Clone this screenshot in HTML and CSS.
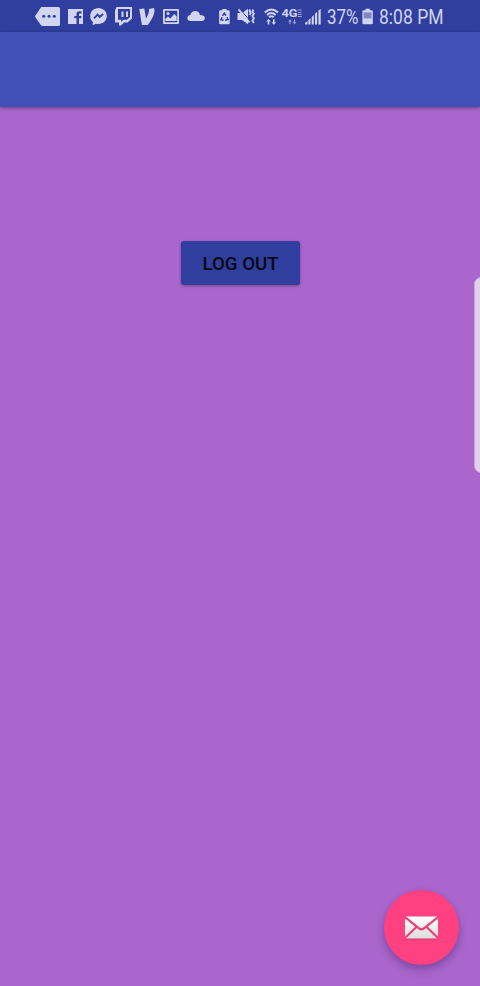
FILE: index.html
```html
<!DOCTYPE html>
<html lang="en">
<head>
<meta charset="utf-8">
<meta name="viewport" content="width=device-width">
<title>Log out</title>
<link rel="stylesheet" href="styles.css">
</head>
<body>
<div class="screen">
  <header class="status">
    <div class="group notifications">
      <svg width="25" height="32" viewBox="35 0 25 32"><path d="M41.500 7H58.500Q60 7 60 8.500V24.500Q60 26 58.500 26H42.500Q41.500 26 40.800 25L35.300 17.300Q34.800 16.500 35.300 15.700L40.500 8Q41 7 41.500 7Z"/><g class="cut"><circle cx="43.700" cy="16.300" r="1.500"/><circle cx="49" cy="16.300" r="1.500"/><circle cx="54.300" cy="16.300" r="1.500"/></g></svg>
      <svg width="15" height="32" viewBox="68 0 15 32"><path d="M68 9H83V24H79V18.300H81.200L81.500 16H79V14.500Q79 13.500 80 13.500H81.500V11.300H79.500Q76.500 11.300 76.500 14V16H74.300V18.300H76.500V24H68Z"/></svg>
      <svg width="17" height="32" viewBox="90.500 0 17 32"><path d="M99 8C94.300 8 90.700 11.600 90.700 16C90.700 18.500 91.700 20.500 93.300 22V25.300L96.200 23.700Q97.600 24.100 99 24.100C103.700 24.100 107.300 20.500 107.300 16.100C107.300 11.600 103.700 8 99 8Z"/><path class="line" d="M94.500 18.300L98 14.700L100.200 17L103.600 14" stroke-width="1.900"/></svg>
      <svg width="17" height="32" viewBox="114.500 0 17 32"><path fill-rule="evenodd" d="M116 7H131.500V18.500L127 22.500H123.500L120.500 25.500H118.500V22.500H114.500V10.500ZM117.500 9V19.700H120.700V22L123 19.700H126.500L129.500 17V9Z"/><path d="M121 11.500H123V17H121ZM125.500 11.500H127.500V17H125.500Z"/></svg>
      <svg width="16" height="32" viewBox="139 0 16 32"><path d="M139.300 9L144.300 8.400L146 18.500C148 15 149.400 11.700 149 8.900L154 7.900C156 13 151.500 20 147.700 25H141.900Z"/></svg>
      <svg width="16" height="32" viewBox="163 0 16 32"><path fill-rule="evenodd" d="M164 9H178Q179 9 179 10V23Q179 24 178 24H164Q163 24 163 23V10Q163 9 164 9ZM164.800 10.800V22.200H177.200V10.800Z"/><circle cx="168" cy="13.500" r="1.500"/><path d="M165.300 21V19L168 16.500L170.300 18.500L174.300 14L176.700 16.500V21Z"/></svg>
      <svg width="18" height="32" viewBox="186 0 18 32"><path d="M189.800 21Q186.300 20.600 186.300 17.900Q186.600 15.300 189.300 15Q190.500 10.900 194.200 10.900Q198 11 199 15Q203.700 15.200 203.900 18.200Q203.700 20.800 201 21Z"/></svg>
    </div>
    <div class="group system">
      <svg class="recycle" width="11" height="32" viewBox="219 0 11 32"><path d="M222.300 9H226.500V10.300H228.500Q229.700 10.300 229.700 11.500V23Q229.700 24.200 228.500 24.200H220.300Q219.100 24.200 219.100 23V11.500Q219.100 10.300 220.300 10.300H222.300Z"/><path class="line" d="M222.500 15.800L224.400 13.300L226 15.500M227 17.300L228 19.500L225.300 20.300M223.500 20.300L221 19.800L222 17.300" stroke-width="1.500"/></svg>
      <svg class="mute" width="18" height="32" viewBox="236.500 0 18 32"><path d="M237 13H241.500L247.500 8.700V24.200L241.500 20H237Z"/><path class="line" d="M239.700 9.200L250.500 22" stroke-width="1"/><path class="ink" d="M238 9.300L249 22.500" stroke-width="1.800"/><path class="ink" d="M249.700 9.500L248.900 11L250.300 13L248.900 15M253 9.500L251.900 11.500L253.400 13.700L251.900 16L253.400 18.200L251.900 20.500L253.300 23" stroke-width="1.800"/></svg>
      <svg class="wifi" width="15" height="32" viewBox="263.500 0 15 32"><path class="ink" d="M264.300 12.500Q270.800 6.300 277.500 12.500M266.500 15Q270.800 11 275.200 15M268.500 17.200Q270.800 15.200 273.200 17.200" stroke-width="1.900"/><path d="M268 19L270.300 21.500H268.800V24.500H267.200V21.500H265.700ZM273.300 24.800L271 22.200H272.500V19.300H274.100V22.200H275.600Z"/></svg>
      <svg class="network" width="20" height="32" viewBox="282 0 20 32"><text class="network-label" x="281.500" y="17.300" textLength="16" lengthAdjust="spacingAndGlyphs">4G</text><path class="ink dim" d="M301.800 10H297.800M298 12.500H301.500M297.800 14.500H301.500M297.800 16.500H301.800" stroke-width="1.200"/><path class="dim" d="M290 19.200L292 21.500H290.600V24.200H289.400V21.500H288ZM294.500 24.400L292.600 22H293.900V19.400H295.100V22H296.400Z"/></svg>
      <svg class="signal" width="16" height="32" viewBox="305 0 16 32"><path d="M305 24.500V23L307.500 21V24.500ZM308.400 24.500V20L310.500 18.200V24.500ZM311.700 24.500V17L313.800 15V24.500ZM315 24.500V13.800L317.100 11.800V24.500ZM318.400 24.500V10.700L320.700 8.800V24.500Z"/></svg>
      <svg class="percent" width="32" height="32" viewBox="0 0 32 32"><text class="reading" x="0" y="24" textLength="31.500" lengthAdjust="spacingAndGlyphs">37%</text></svg>
      <svg class="battery" width="11" height="32" viewBox="362.500 0 11 32"><path d="M366 8.700H370.300V10.300H372Q373.300 10.300 373.300 11.600V23Q373.300 24.300 372 24.300H364.200Q362.900 24.300 362.900 23V11.600Q362.900 10.300 364.200 10.300H366Z"/><path class="drained" d="M364.200 12.300H372V18.500H364.200Z"/></svg>
      <svg class="clock" width="65" height="32" viewBox="0 0 65 32"><text class="reading" x="0" y="24" textLength="64.500" lengthAdjust="spacingAndGlyphs">8:08 PM</text></svg>
    </div>
  </header>
  <div class="toolbar"></div>
  <main class="content">
    <button class="logout" type="button">LOG OUT</button>
  </main>
  <div class="edge-handle"></div>
  <button class="fab" type="button" aria-label="Mail">
    <svg width="35" height="24" viewBox="0 0 35 24"><defs><linearGradient id="paper" x2="0" y2="1"><stop offset="0" stop-color="#fff"/><stop offset="1" stop-color="#dcdcdc"/></linearGradient></defs><rect class="envelope-shadow" x="1" y="1.500" width="33" height="22" rx="1"/><rect x="1" y="0.500" width="33" height="22" rx="1" fill="url(#paper)"/><path class="fold" d="M0.500 0.700L15 12.300Q17.500 14.500 20 12.300L34.500 0.700M1 22L12.700 10.700M34 22L22.300 10.700"/></svg>
  </button>
</div>
</body>
</html>
```

FILE: styles.css
```css
* { box-sizing: border-box; }
body { margin: 0; font-family: Roboto, "Liberation Sans", sans-serif; }
.screen { position: relative; display: flex; flex-direction: column; width: 480px; height: 986px; overflow: hidden; background: #aa66cc; }
.status { display: flex; flex: none; height: 32px; padding-left: 35px; background: #303f9f; }
.group { display: flex; fill: #d1d5ef; }
.group svg { display: block; flex: none; overflow: visible; }
.notifications { gap: 7.6px; width: 184px; }
.cut { fill: #303f9f; }
.line { fill: none; stroke: #303f9f; }
.ink { fill: none; stroke: #d1d5ef; }
.dim { opacity: .65; }
.mute { margin-left: 6.5px; }
.wifi { margin-left: 9px; }
.network { margin-left: 3.5px; }
.signal { margin-left: 3px; }
.percent { margin-left: 6px; }
.battery { margin-left: 3px; }
.clock { margin-left: 6px; }
.network-label { font-size: 11.5px; font-weight: 700; }
.reading { font-size: 20px; }
.drained { fill: #7f88c3; }
.toolbar { flex: none; height: 74.500px; background: #3f51b5; box-shadow: 0 1px 4px rgba(0, 0, 0, .4); }
.content { display: flex; flex: 1; align-items: flex-start; justify-content: center; padding-top: 134px; }
.logout { width: 119px; height: 44px; margin-left: 1px; padding: 3px 0 0; border: 0; border-radius: 3px; background: #303f9f; box-shadow: 0 1px 3px rgba(0, 0, 0, .35); color: #05070f; font: 500 18.7px/1 Roboto, sans-serif; }
.edge-handle { position: absolute; top: 277px; right: -8px; width: 14px; height: 196px; border: 1px solid #c3a9d3; border-radius: 8px; background: #e3d0ec; }
.fab { position: absolute; right: 21px; bottom: 21px; display: flex; align-items: center; justify-content: center; width: 75px; height: 75px; padding: 0; border: 0; border-radius: 50%; background: #ff4081; box-shadow: 0 5px 10px rgba(50, 20, 90, .3), 0 1px 4px rgba(50, 20, 90, .1); }
.envelope-shadow { fill: #b8325f; opacity: .6; }
.fold { fill: none; stroke: #ed4079; stroke-width: 2.2; }
```
